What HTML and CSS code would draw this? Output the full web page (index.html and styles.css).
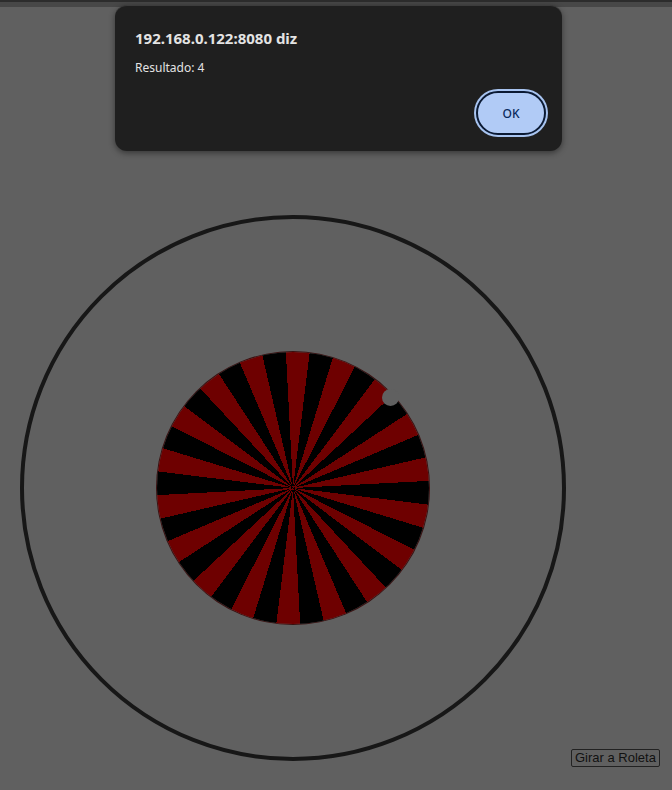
FILE: index.html
```html
<!DOCTYPE html>
<html lang="pt">
<head>
<meta charset="utf-8">
<title>Roleta</title>
<link rel="stylesheet" href="styles.css">
</head>
<body>
<div class="chrome-top"></div>
<main class="stage">
  <div class="table">
    <div class="wheel"><span class="ball"></span></div>
  </div>
  <button class="spin" type="button">Girar a Roleta</button>
</main>
<div class="dialog" role="alertdialog">
  <h1 class="dialog-title">192.168.0.122:8080 diz</h1>
  <p class="dialog-msg">Resultado: 4</p>
  <div class="dialog-actions">
    <button class="ok" type="button">OK</button>
  </div>
</div>
</body>
</html>
```

FILE: styles.css
```css
html, body {
  margin: 0;
  padding: 0;
}
body {
  width: 672px;
  height: 790px;
  background: #606060;
  font-family: "Liberation Sans", Arial, sans-serif;
  overflow: hidden;
  position: relative;
}
.chrome-top {
  height: 7px;
  background: #474747;
  border-top: 2px solid #2c2c2c;
  box-sizing: border-box;
}
.stage {
  display: flex;
  align-items: flex-start;
  padding: 208px 0 0 20px;
}
.table {
  width: 546px;
  height: 546px;
  box-sizing: border-box;
  border: 4px solid #171717;
  border-radius: 50%;
  display: flex;
  align-items: center;
  justify-content: center;
  flex: none;
}
.wheel {
  position: relative;
  width: 272px;
  height: 272px;
  border-radius: 50%;
  background: repeating-conic-gradient(from -3deg, #6e0000 0deg 10deg, #000 10deg 20deg);
  box-shadow: 0 0 0 1px #3a1010;
}
.ball {
  position: absolute;
  left: 225px;
  top: 37px;
  width: 17px;
  height: 17px;
  border-radius: 50%;
  background: #606060;
}
.spin {
  margin: 534px 0 0 5px;
  flex: none;
  font-family: "Liberation Sans", Arial, sans-serif;
  font-size: 13px;
  line-height: 16px;
  height: 18px;
  padding: 0 3px;
  color: #111;
  background: #606060;
  border: 1px solid #222;
  border-radius: 2px;
}
.dialog {
  position: absolute;
  left: 115px;
  top: 5px;
  width: 447px;
  height: 146px;
  box-sizing: border-box;
  padding: 22px 20px 0 20px;
  background: #1f1f1f;
  border-radius: 12px;
  border-top: 1px solid #3c3c3c;
  box-shadow: 0 2px 6px rgba(0,0,0,0.45);
  color: #e3e3e3;
  font-family: "Noto Sans", "Open Sans", sans-serif;
}
.dialog-title {
  margin: 0;
  font-size: 15px;
  font-weight: 700;
  line-height: 20px;
}
.dialog-msg {
  margin: 12px 0 0 0;
  font-size: 12px;
  line-height: 16px;
}
.dialog-actions {
  display: flex;
  justify-content: flex-end;
  margin-top: 15px;
}
.ok {
  width: 70px;
  height: 44px;
  margin-right: -4px;
  border-radius: 22px;
  background: #b1cbf6;
  border: 2px solid #0b1a33;
  box-shadow: 0 0 0 2px #a8c4f0;
  color: #0a2a5c;
  font-family: "Noto Sans", "Open Sans", sans-serif;
  font-size: 12px;
  font-weight: 500;
}
```
